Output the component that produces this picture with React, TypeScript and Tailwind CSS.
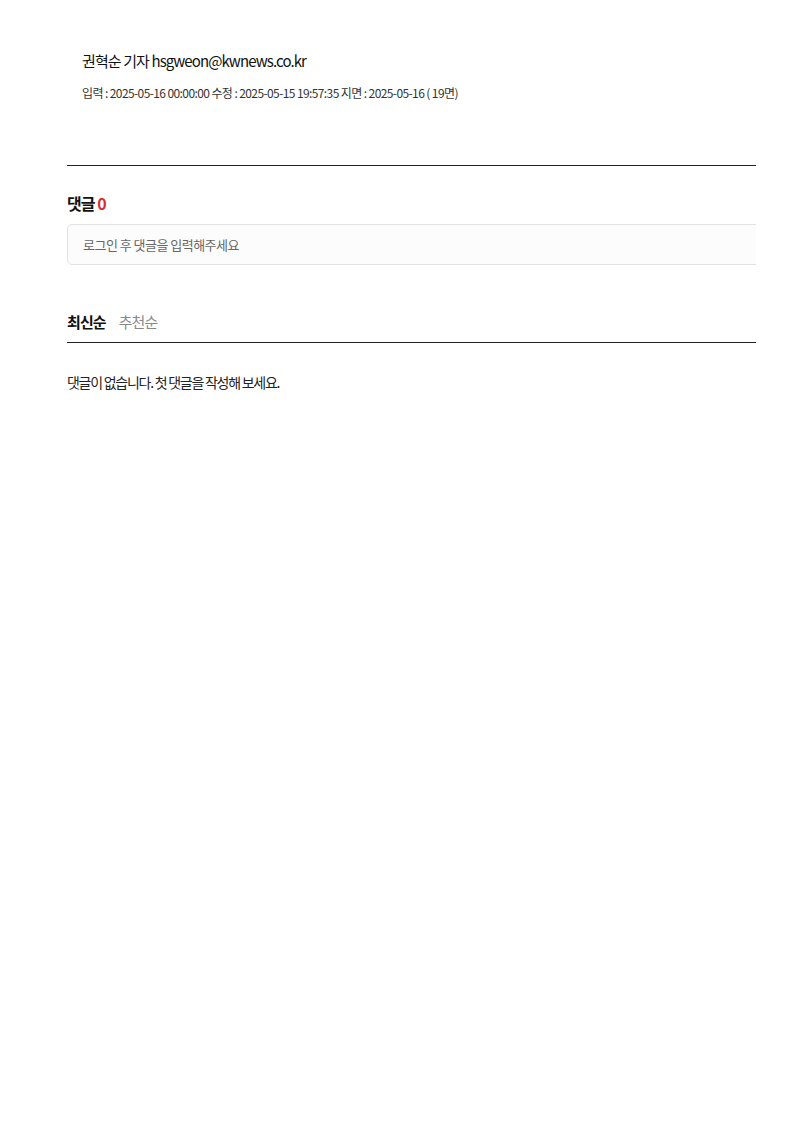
export default function App() {
  return (
    <div className="min-h-screen bg-white font-['Noto_Sans_CJK_KR',sans-serif] text-[#111]">
      <div className="pl-[67px] w-[756px]">

        {/* Byline */}
        <div className="pt-[49px] pl-[15px]">
          <p className="text-[15px] leading-[24px] tracking-[-0.06em] text-[#111]">
            권혁순 기자 hsgweon@kwnews.co.kr
          </p>
          <p className="mt-[11px] text-[12px] leading-[18px] tracking-[-0.05em] text-[#333]">
            입력 : 2025-05-16 00:00:00 수정 : 2025-05-15 19:57:35 지면 : 2025-05-16 ( 19면)
          </p>
        </div>

        {/* Divider */}
        <div className="mt-[63px] border-t border-[#222]" />

        {/* Comments */}
        <div className="mt-[25px] overflow-hidden">
          <h3 className="text-[16px] leading-[24px] font-bold tracking-[-0.06em] text-[#111]">
            댓글 <span className="text-[#d32f2f]">0</span>
          </h3>
          <div className="mt-[9px] w-[720px] h-[41px] rounded-[5px] border border-[#e2e2e2] bg-[#fcfcfc] flex items-center px-[15px]">
            <span className="text-[13px] tracking-[-0.04em] text-[#666]">
              로그인 후 댓글을 입력해주세요
            </span>
          </div>
        </div>

        {/* Sort tabs */}
        <div className="mt-[45px] flex items-center gap-[13px] pb-[8px] border-b border-[#222]">
          <span className="text-[15px] leading-[24px] font-bold tracking-[-0.06em] text-[#111]">최신순</span>
          <span className="text-[15px] leading-[24px] tracking-[-0.06em] text-[#888]">추천순</span>
        </div>

        <p className="mt-[28px] text-[14px] leading-[22px] tracking-[-0.09em] text-[#222]">
          댓글이 없습니다. 첫 댓글을 작성해 보세요.
        </p>
      </div>
    </div>
  )
}
